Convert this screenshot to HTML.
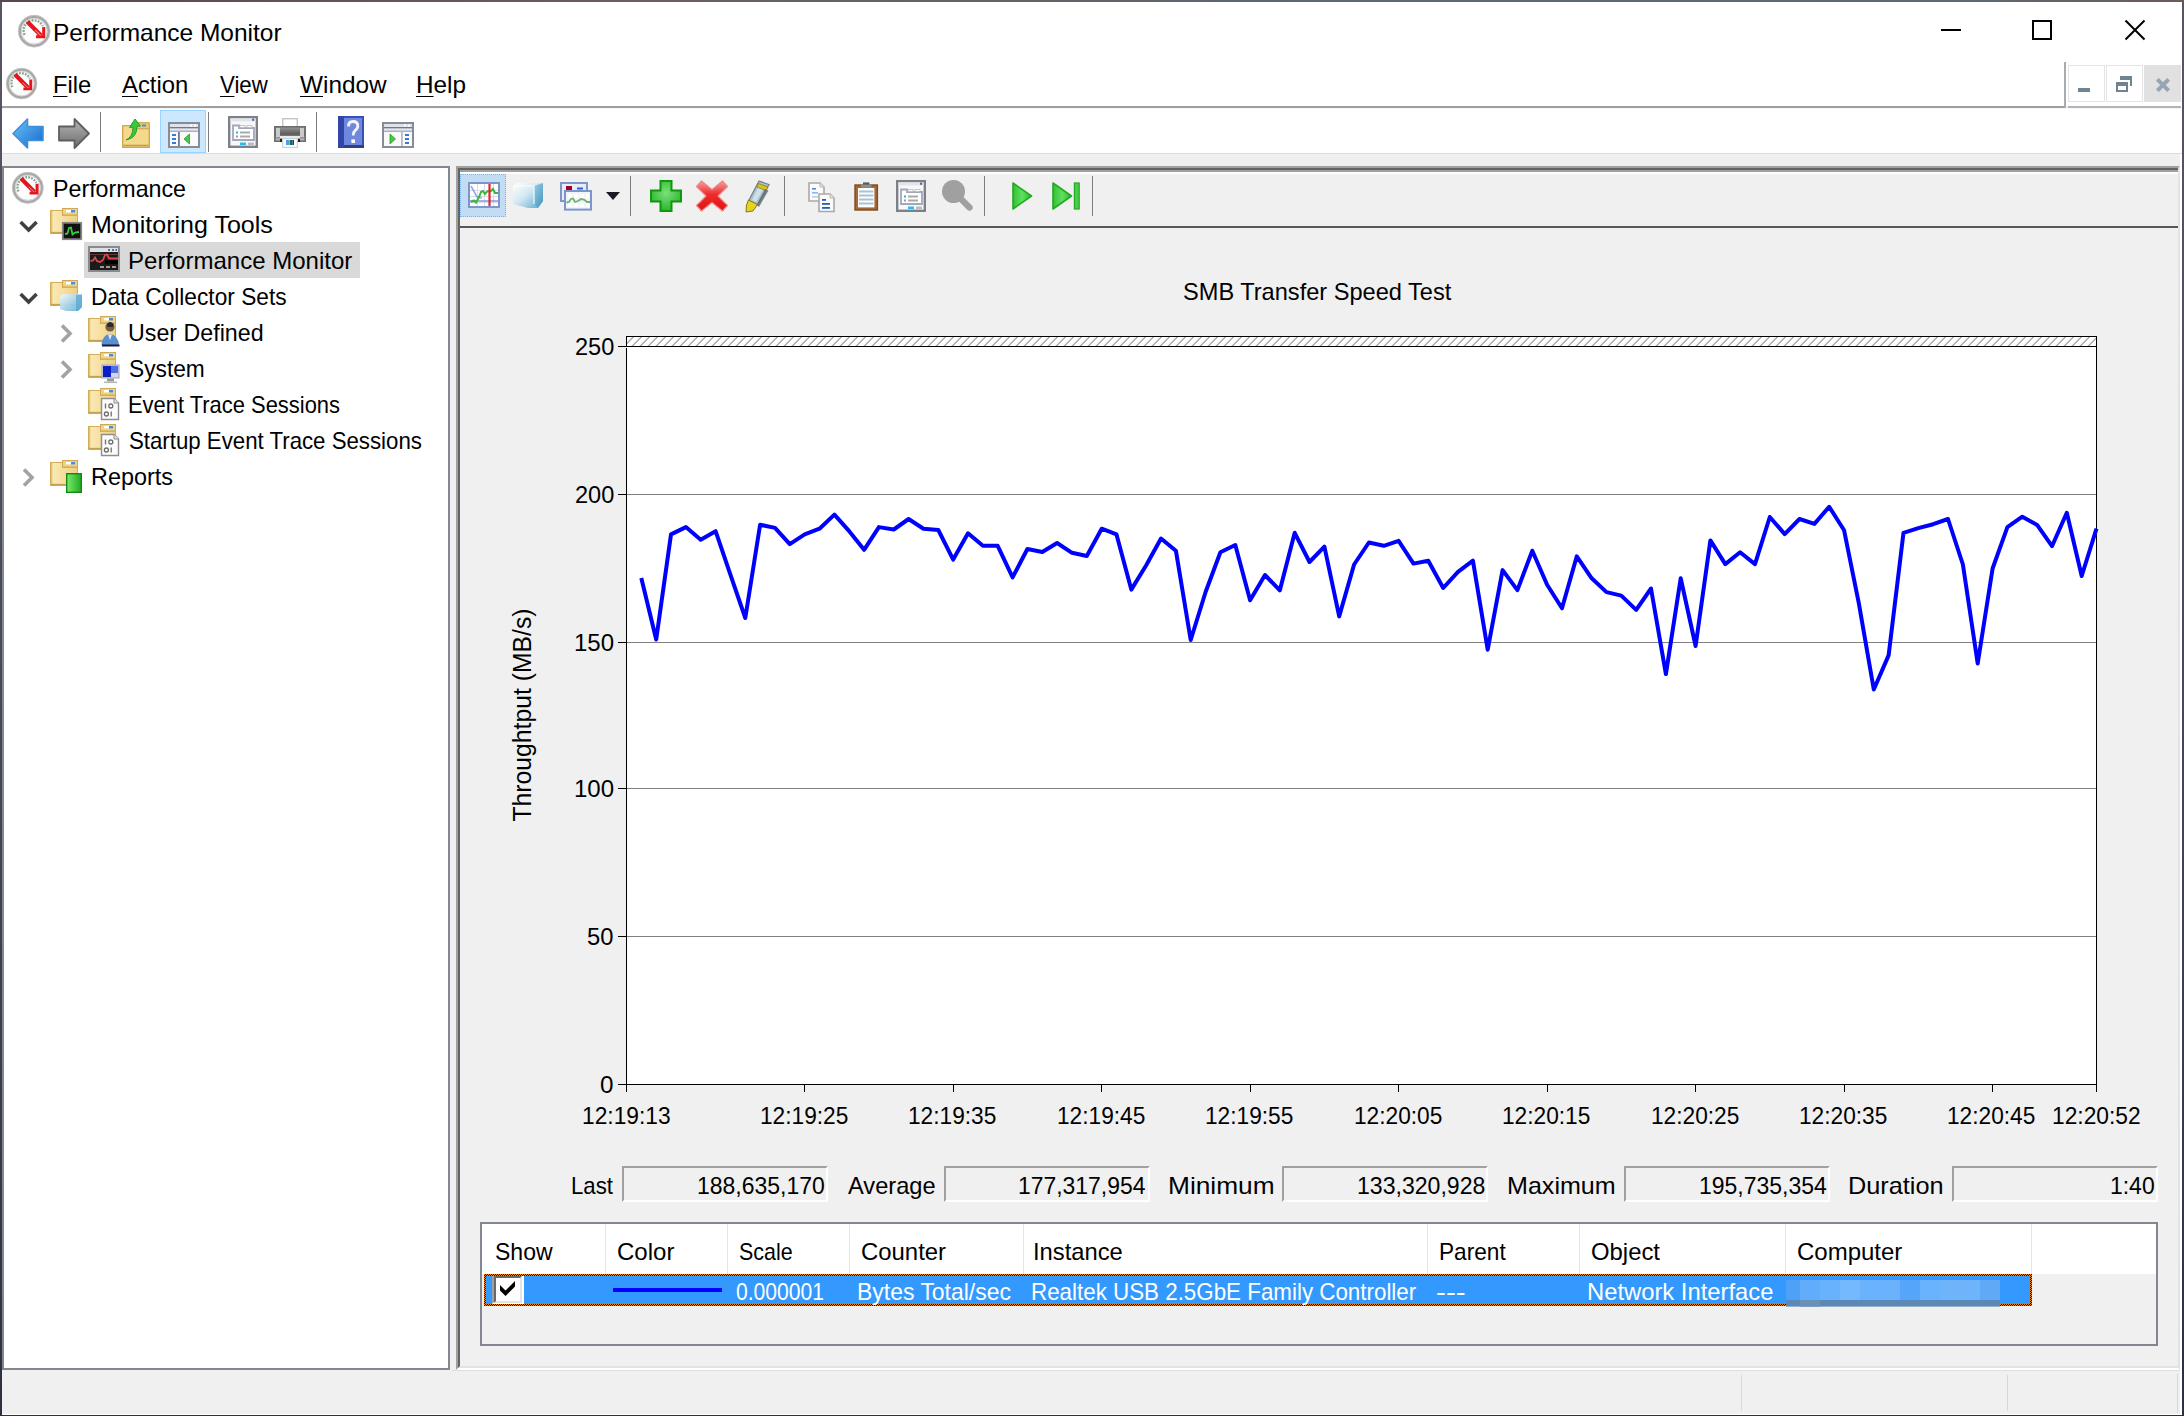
<!DOCTYPE html><html lang="en"><head><meta charset="utf-8"><title>Performance Monitor</title><style>
html,body{margin:0;padding:0;background:#f0f0f0;}
body{width:2184px;height:1416px;overflow:hidden;position:relative;font-family:"Liberation Sans",sans-serif;font-size:24px;}
div,span,svg{position:absolute;box-sizing:border-box;}
.ic{position:absolute;overflow:visible;}
.t{white-space:nowrap;line-height:24px;height:24px;transform-origin:0 50%;display:block;}
.t u{text-decoration:underline;text-decoration-thickness:1.4px;text-underline-offset:3px;}
#win{left:0;top:0;width:2184px;height:1416px;background:linear-gradient(180deg,#5a5560 0,#46485a 50%,#2c3040 100%);}
#client{left:2px;top:2px;width:2180px;height:1412.5px;background:#f0f0f0;border-right:2px solid #fff;border-bottom:1.5px solid #fff;}
#wtop{left:0;top:0;width:2184px;height:2px;background:linear-gradient(90deg,#5a4650 0,#6a5f62 30%,#5d6870 60%,#5f6a72 90%,#6a5a5c 100%);}
#titlebar{left:2px;top:2px;width:2180px;height:60px;background:#fff;}
#menubar{left:2px;top:62px;width:2180px;height:44px;background:#fff;}
#menuline{left:2px;top:106px;width:2063px;height:2px;background:#a0a0a0;}
#menuline2{left:2068px;top:106px;width:2113px;height:2px;background:#b4b4b4;width:113px}
#mdisep{left:2064px;top:62px;width:2px;height:46px;background:#a8acb0;}
#toolbar{left:2px;top:108px;width:2180px;height:45px;background:#fff;border-top:1px solid #f4f7fb;}
#tbline{left:2px;top:153px;width:2180px;height:1px;background:#dcdcdc;}
.sep{width:1px;background:#7d7d7d;}
.mdi{top:65px;width:37px;height:37px;background:#fff;border:1px solid #e3e3e3;}
#tree{left:2px;top:166px;width:448px;height:1204px;background:#fff;border:2px solid #828790;}
#sel{left:84px;top:242px;width:276px;height:36px;background:#d9d9d9;}
#gpane{left:456px;top:166px;width:1724px;height:1204px;background:#f0f0f0;border-top:2px solid #a0a0a0;border-left:2px solid #a0a0a0;border-right:2px solid #e3e3e3;border-bottom:2px solid #fff;}
#gpane2{left:458px;top:168px;width:1720px;height:1200px;border-top:2px solid #646464;border-left:2px solid #646464;border-right:0;border-bottom:2px solid #e3e3e3;}
#gline3{left:460px;top:170px;width:1718px;height:2px;background:#a0a0a0;}
#gwhite{left:460px;top:172px;width:1718px;height:2px;background:#fff;}
#gline{left:460px;top:226px;width:1718px;height:2px;background:#575757;}
#gsel{left:460px;top:174px;width:46px;height:43px;background:#c2dcf3;border:1px dotted #79b4ee;}
#tsel{left:160px;top:110px;width:46px;height:43px;background:#cce8ff;border:1px solid #99d1ff;}
.box{top:1166px;height:36px;border-top:2px solid #a0a0a0;border-left:2px solid #a0a0a0;border-right:2px solid #fff;border-bottom:2px solid #fff;}
#list{left:480px;top:1222px;width:1678px;height:124px;border:2px solid #828790;background:#f0f0f0;}
#lhead{left:482px;top:1224px;width:1674px;height:50px;background:#fff;}
.cs{top:1224px;width:1px;height:50px;background:#e5e5e5;}
#row{left:484px;top:1274px;width:1548px;height:32px;background:#3399ff;}
#chk{left:492px;top:1276px;width:32px;height:28px;background:#fff;border-left:2px solid #a0a0a0;border-top:0;border-right:2px solid #fff;border-bottom:2px solid #fff;}
#chk2{left:494px;top:1276px;width:28px;height:27px;background:#fff;border-left:2px solid #696969;border-top:2px solid #696969;border-right:2px solid #e3e3e3;border-bottom:2px solid #e3e3e3;}
#cline{left:613px;top:1288px;width:109px;height:4px;background:#0000ff;}
#blur{left:1786px;top:1280px;width:214px;height:27px;}
#status1{left:452px;top:1370px;width:1728px;height:1px;background:#dedede;}
.ss2{left:2177px;top:1374px;width:1px;height:39px;background:#d7d7d7;}
.ss{top:1375px;width:1px;height:36px;background:#d7d7d7;}
</style></head><body>
<div id="win"></div><div id="client"></div><div id="wtop"></div>
<div id="titlebar"></div><div id="menubar"></div><div id="menuline"></div><div id="menuline2"></div><div id="mdisep"></div><div id="toolbar"></div><div id="tbline"></div>
<svg class="ic" style="left:17.500000000000004px;top:14.600000000000001px" width="32.4" height="32.4" viewBox="0 0 32 32" ><circle cx="16" cy="16" r="14.5" fill="#fcfcfc" stroke="#a6a6a6" stroke-width="2.8"/><circle cx="16" cy="16" r="15.7" fill="none" stroke="#d0d0d0" stroke-width="0.7"/><circle cx="16" cy="16" r="12.7" fill="none" stroke="#c9c2c2" stroke-width="0.8"/><path d="M6.6 19.6A9.8 9.8 0 0 1 24.4 10.8" fill="none" stroke="#8aa493" stroke-width="2.4" stroke-dasharray="1.8 1.2"/><path d="M9.2 6.6L22.8 20.2" stroke="#e6141c" stroke-width="4.2" stroke-linecap="butt"/><path d="M25.4 11.8V21.4H17.8" fill="none" stroke="#e6141c" stroke-width="3"/><path d="M17 15L22.4 20.2" stroke="#f7c4c4" stroke-width="1" opacity=".7"/></svg>
<svg class="ic" style="left:6.200000000000001px;top:68.0px" width="31.2" height="31.2" viewBox="0 0 32 32" ><circle cx="16" cy="16" r="14.5" fill="#fcfcfc" stroke="#a6a6a6" stroke-width="2.8"/><circle cx="16" cy="16" r="15.7" fill="none" stroke="#d0d0d0" stroke-width="0.7"/><circle cx="16" cy="16" r="12.7" fill="none" stroke="#c9c2c2" stroke-width="0.8"/><path d="M6.6 19.6A9.8 9.8 0 0 1 24.4 10.8" fill="none" stroke="#8aa493" stroke-width="2.4" stroke-dasharray="1.8 1.2"/><path d="M9.2 6.6L22.8 20.2" stroke="#e6141c" stroke-width="4.2" stroke-linecap="butt"/><path d="M25.4 11.8V21.4H17.8" fill="none" stroke="#e6141c" stroke-width="3"/><path d="M17 15L22.4 20.2" stroke="#f7c4c4" stroke-width="1" opacity=".7"/></svg>
<svg class="ic" style="left:1936px;top:15px" width="220" height="30" viewBox="0 0 220 30" ><path d="M5 15H25" stroke="#000" stroke-width="2"/><rect x="97" y="6" width="18" height="18" fill="none" stroke="#000" stroke-width="2"/><path d="M189.5 5.5L208.5 24.5M208.5 5.5L189.5 24.5" stroke="#000" stroke-width="2"/></svg>
<div class="mdi" style="left:2068px"></div><div class="mdi" style="left:2106px"></div><div class="mdi" style="left:2144px;width:37px;background:#e1e1e1;border-color:#e1e1e1"></div>
<svg class="ic" style="left:2068px;top:65px" width="113" height="36" viewBox="0 0 113 36" ><rect x="10" y="23" width="12" height="4" fill="#6f8391"/><g fill="#6f8391"><rect x="52" y="11" width="12" height="4"/><rect x="62" y="15" width="2" height="6"/><rect x="48" y="17" width="12" height="4"/><rect x="48" y="21" width="2" height="6"/><rect x="58" y="21" width="2" height="6"/><rect x="48" y="25" width="12" height="2"/></g><path d="M89.4 14.4L100.6 25.6M100.6 14.4L89.4 25.6" stroke="#97a5b3" stroke-width="4"/></svg>
<div id="tsel"></div>
<svg class="ic" style="left:12px;top:117.5px" width="32" height="31" viewBox="0 0 32 31" ><defs><linearGradient id="ba" x1="0" y1="0" x2="1" y2="1"><stop offset="0" stop-color="#6cc4f8"/><stop offset="1" stop-color="#1668cc"/></linearGradient></defs><path d="M1 15.5L15.5 1V8.5H31V22.5H15.5V30Z" fill="url(#ba)" stroke="#3f8fdc" stroke-width="1.6" stroke-linejoin="round"/></svg><svg class="ic" style="left:58px;top:117.5px" width="32" height="31" viewBox="0 0 32 31" ><defs><linearGradient id="fa" x1="0" y1="0" x2="0" y2="1"><stop offset="0" stop-color="#b5b5b5"/><stop offset="1" stop-color="#6d6d6d"/></linearGradient></defs><path d="M31 15.5L16.5 1V8.5H1V22.5H16.5V30Z" fill="url(#fa)" stroke="#5f5f5f" stroke-width="1.8" stroke-linejoin="round"/></svg><svg class="ic" style="left:122px;top:118px" width="28" height="30" viewBox="0 0 28 30" ><rect x="0.7" y="7.7" width="26.6" height="21.6" fill="#f4d98c" stroke="#d2a94f" stroke-width="1.4"/><rect x="14" y="4.7" width="13.3" height="6" fill="#ecc96f" stroke="#d2a94f" stroke-width="1.2"/><rect x="20" y="6.5" width="4" height="2" fill="#3f8fe8"/><path d="M1.5 27.5H26.5" stroke="#c79f4a" stroke-width="1.6"/><path d="M4 22Q11 19 11 9L7.5 9.5L13 1L18.5 8L15 8.5Q15 20 4 22Z" fill="#3fc63f" stroke="#25a025" stroke-width="1"/></svg><svg class="ic" style="left:168px;top:122px" width="32" height="26" viewBox="0 0 32 26" ><rect x="1" y="1" width="30" height="24" fill="#fafafa" stroke="#868c98" stroke-width="2"/><rect x="2" y="2" width="28" height="3" fill="#dfe2ea"/><rect x="22" y="2.5" width="2" height="2" fill="#fff"/><rect x="26" y="2.5" width="2" height="2" fill="#fff"/><rect x="2" y="5" width="28" height="1.6" fill="#6f7890"/><rect x="2" y="6.6" width="28" height="2" fill="#e4e6ec"/><rect x="2" y="8.6" width="28" height="1.2" fill="#9aa0ae"/><rect x="10" y="10" width="1.8" height="14" fill="#6f7890"/><rect x="4" y="12" width="4" height="2" fill="#3b78d8"/><rect x="4" y="16" width="4" height="2" fill="#3b78d8"/><rect x="4" y="20" width="4" height="2" fill="#3b78d8"/><path d="M21.5 12V22L16 17Z" fill="#45c845" stroke="#2aa02a" stroke-width=".8"/></svg><svg class="ic" style="left:228px;top:116px" width="30" height="32" viewBox="0 0 30 32" ><rect x="1.2" y="1.2" width="27.6" height="29.6" fill="#f7f8fa" stroke="#7e8088" stroke-width="2.4"/><rect x="2.4" y="2.4" width="25.2" height="3" fill="#e2e4ea"/><rect x="24" y="2.6" width="2.2" height="2.2" fill="#5b6796"/><path d="M5 9.5H11V12H26V24H5Z" fill="#fff" stroke="#a3a7b8" stroke-width="1.8"/><rect x="12" y="9.5" width="5" height="2" fill="#fff" stroke="#b6bac8" stroke-width=".8"/><rect x="19" y="9.5" width="5" height="2" fill="#fff" stroke="#b6bac8" stroke-width=".8"/><rect x="8" y="15.5" width="2" height="2" fill="#19b4f0"/><rect x="12" y="15.5" width="10" height="2" fill="#a9a9a9"/><rect x="8" y="19.5" width="2" height="2" fill="#9a9a9a"/><rect x="12" y="19.5" width="10" height="2" fill="#a9a9a9"/><rect x="12" y="26.5" width="6" height="2.6" fill="#27bdf2"/><rect x="20" y="26.5" width="6" height="2.6" fill="#bdbdbd"/></svg><svg class="ic" style="left:274px;top:118px" width="32" height="30" viewBox="0 0 32 30" ><rect x="8.7" y="0.7" width="14.6" height="9" fill="#fff" stroke="#c4c4c4" stroke-width="1.4"/><defs><linearGradient id="pr" x1="0" y1="0" x2="0" y2="1"><stop offset="0" stop-color="#9a9a9a"/><stop offset=".5" stop-color="#5c5c5c"/><stop offset="1" stop-color="#cfcfcf"/></linearGradient></defs><rect x="0.8" y="8.8" width="30.4" height="14.4" fill="url(#pr)" stroke="#6e6e6e" stroke-width="1.6"/><rect x="2" y="10" width="4" height="9" fill="#c9c9c9"/><rect x="26" y="10" width="4" height="9" fill="#c9c9c9"/><rect x="6" y="18" width="20" height="2" fill="#e9e9e9"/><rect x="6" y="21" width="2" height="3" fill="#222"/><rect x="24" y="21" width="2" height="3" fill="#222"/><rect x="8.7" y="20.7" width="14.6" height="8.8" fill="#fff" stroke="#c9d4e2" stroke-width="1.2"/><rect x="12" y="22" width="3" height="5" fill="#4aa0ee"/><rect x="15.5" y="22" width="3" height="5" fill="#1f6e3a"/><rect x="18.5" y="22" width="1.5" height="5" fill="#1a3f8a"/></svg><svg class="ic" style="left:338px;top:116px" width="26" height="32" viewBox="0 0 26 32" ><rect x="0" y="0" width="26" height="32" fill="#3a4fb4"/><rect x="6" y="2" width="18" height="28" fill="#6d88de"/><rect x="0" y="29" width="26" height="3" fill="#34407e"/><rect x="0" y="0" width="6" height="32" fill="#3246a8"/><path d="M10.5 10.5Q10.5 5.5 15 5.5Q19.8 5.5 19.8 10Q19.8 12.6 17 14.6Q15.2 16 15.2 19.5" fill="none" stroke="#f4f6fc" stroke-width="2.8"/><rect x="13.4" y="23.4" width="3.6" height="3.6" fill="#fff"/><path d="M12.5 11.5Q12.5 8 15.5 8" fill="none" stroke="#8a96c8" stroke-width="1" opacity=".7"/></svg><svg class="ic" style="left:382px;top:122px" width="32" height="26" viewBox="0 0 32 26" ><rect x="1" y="1" width="30" height="24" fill="#fafafa" stroke="#868c98" stroke-width="2"/><rect x="2" y="2" width="28" height="3" fill="#dfe2ea"/><rect x="22" y="2.5" width="2" height="2" fill="#fff"/><rect x="26" y="2.5" width="2" height="2" fill="#fff"/><rect x="2" y="5" width="28" height="1.6" fill="#6f7890"/><rect x="2" y="6.6" width="28" height="2" fill="#e4e6ec"/><rect x="2" y="8.6" width="28" height="1.2" fill="#9aa0ae"/><rect x="19" y="10" width="1.8" height="14" fill="#b8bcc8"/><rect x="23" y="12" width="4" height="2" fill="#3b78d8"/><rect x="23" y="16" width="4" height="2" fill="#3b78d8"/><rect x="23" y="20" width="4" height="2" fill="#3b78d8"/><path d="M8 12V22L13.5 17Z" fill="#45c845" stroke="#2aa02a" stroke-width=".8"/></svg>
<div class="sep" style="left:100px;top:112px;height:40px"></div>
<div class="sep" style="left:208px;top:112px;height:40px"></div>
<div class="sep" style="left:316px;top:112px;height:40px"></div>
<div id="tree"></div><div id="sel"></div>
<svg class="ic" style="left:12.099999999999998px;top:172.2px" width="31.6" height="31.6" viewBox="0 0 32 32" ><circle cx="16" cy="16" r="14.5" fill="#fcfcfc" stroke="#a6a6a6" stroke-width="2.8"/><circle cx="16" cy="16" r="15.7" fill="none" stroke="#d0d0d0" stroke-width="0.7"/><circle cx="16" cy="16" r="12.7" fill="none" stroke="#c9c2c2" stroke-width="0.8"/><path d="M6.6 19.6A9.8 9.8 0 0 1 24.4 10.8" fill="none" stroke="#8aa493" stroke-width="2.4" stroke-dasharray="1.8 1.2"/><path d="M9.2 6.6L22.8 20.2" stroke="#e6141c" stroke-width="4.2" stroke-linecap="butt"/><path d="M25.4 11.8V21.4H17.8" fill="none" stroke="#e6141c" stroke-width="3"/><path d="M17 15L22.4 20.2" stroke="#f7c4c4" stroke-width="1" opacity=".7"/></svg>
<svg class="ic" style="left:18.5px;top:220px" width="20" height="14" viewBox="0 0 20 14" ><path d="M1.6 2L9.6 10L17.6 2" fill="none" stroke="#404040" stroke-width="3.5"/></svg><svg class="ic" style="left:50px;top:208px" width="36" height="36" viewBox="0 0 36 36" ><defs><linearGradient id="fg1" x1="0" y1="0" x2="1" y2="0"><stop offset="0" stop-color="#fbebbb"/><stop offset=".45" stop-color="#f6dfa0"/><stop offset="1" stop-color="#efd080"/></linearGradient></defs><rect x="0.5" y="2.5" width="27" height="23" fill="url(#fg1)" stroke="#d3ad59"/><rect x="12.5" y="0.5" width="15" height="7" fill="#efd285" stroke="#cfa852"/><rect x="16" y="2" width="5" height="2.4" fill="#fff"/><rect x="21" y="2" width="4" height="2.4" fill="#3f8fe8"/><rect x="13" y="6.4" width="14" height="1.5" fill="#d6b05c"/><rect x="1" y="3" width="1.4" height="22" fill="#e3c272"/><path d="M1 24.6H27" stroke="#c9a14c" stroke-width="1.5"/><rect x="12.8" y="14.8" width="18.4" height="16.4" fill="#111" stroke="#858585" stroke-width="1.8"/><path d="M15 26L17.5 25.5L19 20L21 19.5L22.5 26.5L25 24.5L29 24" fill="none" stroke="#3ccc3c" stroke-width="1.8"/></svg>
<svg class="ic" style="left:88px;top:246px" width="32" height="26" viewBox="0 0 32 26" ><rect x="1" y="1" width="30" height="24" fill="#1b1b1b" stroke="#8a8a8a" stroke-width="2"/><rect x="2" y="2" width="28" height="4" fill="#dcdfe6"/><rect x="20" y="3" width="2" height="2" fill="#5a6a9a"/><rect x="24" y="3" width="2" height="2" fill="#5a6a9a"/><rect x="27.5" y="3" width="1.5" height="2" fill="#5a6a9a"/><path d="M2 8.5H30" stroke="#5a3a3a" stroke-width="1"/><rect x="17" y="14.5" width="13" height="3.6" fill="#000"/><path d="M2.5 15L5 14.5L7 11.5L9 15L12 16L15 14L17 9L19 8.5L21 12.5L30 12.5" fill="none" stroke="#e04646" stroke-width="1.8"/><rect x="12" y="20" width="4" height="2" fill="#9a9a9a"/><rect x="18" y="20" width="4" height="2" fill="#9a9a9a"/><rect x="24" y="20" width="4" height="2" fill="#9a9a9a"/></svg>
<svg class="ic" style="left:18.5px;top:292px" width="20" height="14" viewBox="0 0 20 14" ><path d="M1.6 2L9.6 10L17.6 2" fill="none" stroke="#404040" stroke-width="3.5"/></svg><svg class="ic" style="left:50px;top:280px" width="36" height="36" viewBox="0 0 36 36" ><defs><linearGradient id="fg2" x1="0" y1="0" x2="1" y2="0"><stop offset="0" stop-color="#fbebbb"/><stop offset=".45" stop-color="#f6dfa0"/><stop offset="1" stop-color="#efd080"/></linearGradient></defs><rect x="0.5" y="2.5" width="27" height="23" fill="url(#fg2)" stroke="#d3ad59"/><rect x="12.5" y="0.5" width="15" height="7" fill="#efd285" stroke="#cfa852"/><rect x="16" y="2" width="5" height="2.4" fill="#fff"/><rect x="21" y="2" width="4" height="2.4" fill="#3f8fe8"/><rect x="13" y="6.4" width="14" height="1.5" fill="#d6b05c"/><rect x="1" y="3" width="1.4" height="22" fill="#e3c272"/><path d="M1 24.6H27" stroke="#c9a14c" stroke-width="1.5"/><defs><linearGradient id="cb2" x1="0" y1="0" x2="1" y2="1"><stop offset="0" stop-color="#f4f8fb"/><stop offset="1" stop-color="#5fb0d6"/></linearGradient></defs><path d="M10 16L13 14H32V27L28 31H16L10 29Z" fill="url(#cb2)" opacity=".95"/><path d="M26 15H32V27L28 31H26Z" fill="#58a8cf" opacity=".75"/></svg>
<svg class="ic" style="left:60px;top:324px" width="14" height="20" viewBox="0 0 14 20" ><path d="M2 1.6L10 9.6L2 17.6" fill="none" stroke="#a3a3a3" stroke-width="3.6"/></svg><svg class="ic" style="left:88px;top:316px" width="36" height="36" viewBox="0 0 36 36" ><defs><linearGradient id="fg3" x1="0" y1="0" x2="1" y2="0"><stop offset="0" stop-color="#fbebbb"/><stop offset=".45" stop-color="#f6dfa0"/><stop offset="1" stop-color="#efd080"/></linearGradient></defs><rect x="0.5" y="2.5" width="27" height="23" fill="url(#fg3)" stroke="#d3ad59"/><rect x="12.5" y="0.5" width="15" height="7" fill="#efd285" stroke="#cfa852"/><rect x="16" y="2" width="5" height="2.4" fill="#fff"/><rect x="21" y="2" width="4" height="2.4" fill="#3f8fe8"/><rect x="13" y="6.4" width="14" height="1.5" fill="#d6b05c"/><rect x="1" y="3" width="1.4" height="22" fill="#e3c272"/><path d="M1 24.6H27" stroke="#c9a14c" stroke-width="1.5"/><circle cx="22" cy="11" r="4.6" fill="#7a5a40"/><path d="M19 8Q22 4 25.5 8L25 11H19.5Z" fill="#2b2b2b"/><path d="M13.5 29Q14 19 22 18Q30 19 31 29Z" fill="#5b8fd0"/><path d="M20 18.5L22 24L24 18.5Z" fill="#e9eef6"/><path d="M14 29.5H31.5" stroke="#1b1b3a" stroke-width="2"/></svg>
<svg class="ic" style="left:60px;top:360px" width="14" height="20" viewBox="0 0 14 20" ><path d="M2 1.6L10 9.6L2 17.6" fill="none" stroke="#a3a3a3" stroke-width="3.6"/></svg><svg class="ic" style="left:88px;top:352px" width="36" height="36" viewBox="0 0 36 36" ><defs><linearGradient id="fg4" x1="0" y1="0" x2="1" y2="0"><stop offset="0" stop-color="#fbebbb"/><stop offset=".45" stop-color="#f6dfa0"/><stop offset="1" stop-color="#efd080"/></linearGradient></defs><rect x="0.5" y="2.5" width="27" height="23" fill="url(#fg4)" stroke="#d3ad59"/><rect x="12.5" y="0.5" width="15" height="7" fill="#efd285" stroke="#cfa852"/><rect x="16" y="2" width="5" height="2.4" fill="#fff"/><rect x="21" y="2" width="4" height="2.4" fill="#3f8fe8"/><rect x="13" y="6.4" width="14" height="1.5" fill="#d6b05c"/><rect x="1" y="3" width="1.4" height="22" fill="#e3c272"/><path d="M1 24.6H27" stroke="#c9a14c" stroke-width="1.5"/><rect x="14" y="13" width="17" height="13" fill="#cfd6e6" stroke="#9aa3b7"/><rect x="15" y="14" width="8" height="11" fill="#0d1fc4"/><rect x="23" y="14" width="7" height="7" fill="#4d6fe6"/><rect x="19" y="26.5" width="7" height="3" fill="#9a9a9a"/><rect x="16" y="29.5" width="13" height="1.6" fill="#b8b8b8"/></svg>
<svg class="ic" style="left:88px;top:388px" width="36" height="36" viewBox="0 0 36 36" ><defs><linearGradient id="fg5" x1="0" y1="0" x2="1" y2="0"><stop offset="0" stop-color="#fbebbb"/><stop offset=".45" stop-color="#f6dfa0"/><stop offset="1" stop-color="#efd080"/></linearGradient></defs><rect x="0.5" y="2.5" width="27" height="23" fill="url(#fg5)" stroke="#d3ad59"/><rect x="12.5" y="0.5" width="15" height="7" fill="#efd285" stroke="#cfa852"/><rect x="16" y="2" width="5" height="2.4" fill="#fff"/><rect x="21" y="2" width="4" height="2.4" fill="#3f8fe8"/><rect x="13" y="6.4" width="14" height="1.5" fill="#d6b05c"/><rect x="1" y="3" width="1.4" height="22" fill="#e3c272"/><path d="M1 24.6H27" stroke="#c9a14c" stroke-width="1.5"/><path d="M13.5 10.5H26L30.5 15V31.5H13.5Z" fill="#fbfbfb" stroke="#8e8e8e" stroke-width="1.4"/><path d="M26 10.5V15H30.5" fill="#e4e4e4" stroke="#8e8e8e" stroke-width="1"/><g fill="none" stroke="#6e6e6e" stroke-width="1.3"><path d="M17.5 15.5V20.5"/><circle cx="22.8" cy="18" r="2"/><circle cx="18.4" cy="26" r="2"/><path d="M23.2 23.5V28.5"/></g></svg>
<svg class="ic" style="left:88px;top:424px" width="36" height="36" viewBox="0 0 36 36" ><defs><linearGradient id="fg6" x1="0" y1="0" x2="1" y2="0"><stop offset="0" stop-color="#fbebbb"/><stop offset=".45" stop-color="#f6dfa0"/><stop offset="1" stop-color="#efd080"/></linearGradient></defs><rect x="0.5" y="2.5" width="27" height="23" fill="url(#fg6)" stroke="#d3ad59"/><rect x="12.5" y="0.5" width="15" height="7" fill="#efd285" stroke="#cfa852"/><rect x="16" y="2" width="5" height="2.4" fill="#fff"/><rect x="21" y="2" width="4" height="2.4" fill="#3f8fe8"/><rect x="13" y="6.4" width="14" height="1.5" fill="#d6b05c"/><rect x="1" y="3" width="1.4" height="22" fill="#e3c272"/><path d="M1 24.6H27" stroke="#c9a14c" stroke-width="1.5"/><path d="M13.5 10.5H26L30.5 15V31.5H13.5Z" fill="#fbfbfb" stroke="#8e8e8e" stroke-width="1.4"/><path d="M26 10.5V15H30.5" fill="#e4e4e4" stroke="#8e8e8e" stroke-width="1"/><g fill="none" stroke="#6e6e6e" stroke-width="1.3"><path d="M17.5 15.5V20.5"/><circle cx="22.8" cy="18" r="2"/><circle cx="18.4" cy="26" r="2"/><path d="M23.2 23.5V28.5"/></g></svg>
<svg class="ic" style="left:22px;top:468px" width="14" height="20" viewBox="0 0 14 20" ><path d="M2 1.6L10 9.6L2 17.6" fill="none" stroke="#a3a3a3" stroke-width="3.6"/></svg><svg class="ic" style="left:50px;top:460px" width="36" height="36" viewBox="0 0 36 36" ><defs><linearGradient id="fg7" x1="0" y1="0" x2="1" y2="0"><stop offset="0" stop-color="#fbebbb"/><stop offset=".45" stop-color="#f6dfa0"/><stop offset="1" stop-color="#efd080"/></linearGradient></defs><rect x="0.5" y="2.5" width="27" height="23" fill="url(#fg7)" stroke="#d3ad59"/><rect x="12.5" y="0.5" width="15" height="7" fill="#efd285" stroke="#cfa852"/><rect x="16" y="2" width="5" height="2.4" fill="#fff"/><rect x="21" y="2" width="4" height="2.4" fill="#3f8fe8"/><rect x="13" y="6.4" width="14" height="1.5" fill="#d6b05c"/><rect x="1" y="3" width="1.4" height="22" fill="#e3c272"/><path d="M1 24.6H27" stroke="#c9a14c" stroke-width="1.5"/><defs><linearGradient id="rp7" x1="0" y1="0" x2="1" y2="0"><stop offset="0" stop-color="#7bea6e"/><stop offset="1" stop-color="#1faa1f"/></linearGradient></defs><rect x="16.7" y="13.7" width="14.6" height="18.6" fill="url(#rp7)" stroke="#148a14" stroke-width="1.4"/></svg>
<div id="gpane"></div><div id="gpane2"></div><div id="gline3"></div><div id="gwhite"></div><div id="gline"></div><div id="gsel"></div>
<svg class="ic" style="left:468px;top:182px" width="32" height="26" viewBox="0 0 32 26" ><rect x="1" y="1" width="30" height="24" fill="#fff" stroke="#7d95c9" stroke-width="2"/><g stroke="#d4dcec" stroke-width="1"><path d="M2 8.5H30M2 14.5H30M2 20.5H30M9.5 2V24M16.5 2V24M25.5 2V24"/></g><path d="M2 19H30" stroke="#5c78c8" stroke-width="1.4" opacity=".8"/><path d="M3 4L9 15L14 16" stroke="#7d95d8" stroke-width="1.6" fill="none" opacity=".8"/><path d="M3 20L6 18.5L8 20.5L11 15L13 10L15 9L17 12L19 9.5L23 9L25 7L27 11L30 11" fill="none" stroke="#3cb43c" stroke-width="2"/><path d="M21.5 2V24" stroke="#e8202a" stroke-width="2.2"/></svg><svg class="ic" style="left:512px;top:182px" width="32" height="27" viewBox="0 0 32 27" ><defs><linearGradient id="c1" x1="0" y1="0" x2="1" y2="1"><stop offset="0" stop-color="#ffffff"/><stop offset=".45" stop-color="#d4e8f2"/><stop offset="1" stop-color="#56a8d0"/></linearGradient><linearGradient id="c2" x1="0" y1="0" x2="1" y2="1"><stop offset="0" stop-color="#8cc6e0"/><stop offset="1" stop-color="#3f92bc"/></linearGradient></defs><path d="M1 4L5 1H31V19L26 26H16L1 22Z" fill="url(#c1)"/><path d="M22 4L31 1V19L26 26L22 22Z" fill="url(#c2)" opacity=".85"/><path d="M1 4H22V22" fill="none" stroke="#fff" stroke-width="1.2" opacity=".9"/></svg><svg class="ic" style="left:560px;top:181.5px" width="32" height="29" viewBox="0 0 32 29" ><rect x="1" y="1" width="26" height="18" fill="#e8ecf4" stroke="#7d95c9" stroke-width="2"/><rect x="6" y="4" width="6" height="4.4" fill="#a1002a"/><rect x="17" y="5.5" width="6" height="2" fill="#2f5fd8"/><rect x="5" y="9" width="26" height="18.6" fill="#f2f4f8" stroke="#7d95c9" stroke-width="2"/><g fill="#fff"><rect x="8" y="12" width="4" height="4"/><rect x="14" y="12" width="4" height="4"/><rect x="20" y="12" width="4" height="4"/><rect x="26" y="12" width="3" height="4"/><rect x="8" y="21" width="4" height="4"/><rect x="14" y="21" width="4" height="4"/><rect x="20" y="21" width="4" height="4"/><rect x="26" y="21" width="3" height="4"/></g><path d="M6.5 20.5L9 20L11 17L13 16.5L15 20L18 19L21 17L24 17.5L27 20L30 20" fill="none" stroke="#6fb36f" stroke-width="1.8"/></svg><svg class="ic" style="left:606px;top:192px" width="14" height="8" viewBox="0 0 14 8" ><path d="M0 0H14L7 8Z" fill="#1a1a24"/></svg>
<svg class="ic" style="left:650px;top:180px" width="32" height="32" viewBox="0 0 32 32" ><defs><radialGradient id="ga" cx=".5" cy=".4" r=".7"><stop offset="0" stop-color="#7be07b"/><stop offset="1" stop-color="#1fae1f"/></radialGradient></defs><path d="M10.5 1H21.5V10.5H31V21.5H21.5V31H10.5V21.5H1V10.5H10.5Z" fill="url(#ga)" stroke="#0d980d" stroke-width="2" stroke-linejoin="miter"/></svg><svg class="ic" style="left:695.5px;top:180px" width="32" height="32" viewBox="0 0 32 32" ><defs><linearGradient id="gd" x1="0" y1="0" x2="0" y2="1"><stop offset="0" stop-color="#f4a0a0"/><stop offset=".45" stop-color="#ee2a2a"/><stop offset="1" stop-color="#e01212"/></linearGradient></defs><path d="M5.5 1L16 9.5L26.5 1L31.5 6.5L22 16L31.5 25.5L26.5 31L16 22.5L5.5 31L0.5 25.5L10 16L0.5 6.5Z" fill="url(#gd)" stroke="#ee8a8a" stroke-width="1.2" stroke-linejoin="round"/></svg><svg class="ic" style="left:745px;top:180px" width="26" height="33" viewBox="0 0 26 33" ><path d="M14 1L24 4.5L12.5 25L3.5 21Z" fill="#a9c4cc" stroke="#6f8088" stroke-width="1.2"/><path d="M15 4L20 6L11 22L7 20Z" fill="#d8e8ec" opacity=".8"/><path d="M13.5 3.5L23 7L21 10.5L12 7Z" fill="#d9c51c" stroke="#8a7a10" stroke-width=".8"/><path d="M3.5 20L12.5 24.5L8 31L1 32L1.5 25Z" fill="#e4d41f" stroke="#8a7a10" stroke-width="1"/><path d="M20 9L23.5 10.5L14 27L11.5 25Z" fill="#5d6a70" opacity=".8"/></svg><svg class="ic" style="left:808px;top:181.5px" width="27" height="31" viewBox="0 0 27 31" ><path d="M1 1H12L16 5V19H1Z" fill="#fbfbfb" stroke="#a9a9a9" stroke-width="1.6"/><path d="M12 1V5H16" fill="#e6e6e6" stroke="#b5b5b5" stroke-width="1"/><g fill="#4a90d9"><rect x="4" y="6" width="4" height="1.6"/><rect x="4" y="10" width="6" height="1.6" opacity=".6"/><rect x="4" y="14" width="6" height="1.6" opacity=".4"/></g><path d="M11 12H22L26 16V29.5H11Z" fill="#fbfbfb" stroke="#a9a9a9" stroke-width="1.6"/><path d="M22 12V16H26" fill="#e6e6e6" stroke="#b5b5b5" stroke-width="1"/><g fill="#1f5fb8"><rect x="14" y="17" width="4" height="1.8"/><rect x="14" y="21" width="8" height="1.8"/><rect x="14" y="25" width="8" height="1.8"/></g></svg><svg class="ic" style="left:854px;top:181.5px" width="25" height="29" viewBox="0 0 25 29" ><rect x="1" y="3" width="22.4" height="25" fill="#a46a35" stroke="#7e4c20" stroke-width="1.4"/><rect x="4" y="6" width="16.4" height="19.4" fill="#fdfdfd"/><g fill="#a9c3d6"><rect x="5" y="8.5" width="14.4" height="2"/><rect x="5" y="12.5" width="14.4" height="2"/><rect x="5" y="16.5" width="14.4" height="2"/><rect x="5" y="20.5" width="14.4" height="2"/></g><rect x="7" y="2" width="10.4" height="3.6" fill="#8e8e8e"/><rect x="9" y="0.4" width="6.4" height="2.2" fill="#5a5a5a"/></svg><svg class="ic" style="left:896px;top:180px" width="30" height="32" viewBox="0 0 30 32" ><rect x="1.2" y="1.2" width="27.6" height="29.6" fill="#f7f8fa" stroke="#7e8088" stroke-width="2.4"/><rect x="2.4" y="2.4" width="25.2" height="3" fill="#e2e4ea"/><rect x="24" y="2.6" width="2.2" height="2.2" fill="#5b6796"/><path d="M5 9.5H11V12H26V24H5Z" fill="#fff" stroke="#a3a7b8" stroke-width="1.8"/><rect x="12" y="9.5" width="5" height="2" fill="#fff" stroke="#b6bac8" stroke-width=".8"/><rect x="19" y="9.5" width="5" height="2" fill="#fff" stroke="#b6bac8" stroke-width=".8"/><rect x="8" y="15.5" width="2" height="2" fill="#19b4f0"/><rect x="12" y="15.5" width="10" height="2" fill="#a9a9a9"/><rect x="8" y="19.5" width="2" height="2" fill="#9a9a9a"/><rect x="12" y="19.5" width="10" height="2" fill="#a9a9a9"/><rect x="12" y="26.5" width="6" height="2.6" fill="#27bdf2"/><rect x="20" y="26.5" width="6" height="2.6" fill="#bdbdbd"/></svg><svg class="ic" style="left:941.5px;top:179.5px" width="31" height="32" viewBox="0 0 31 32" ><circle cx="11.5" cy="11.5" r="11.5" fill="#a0a0a0"/><path d="M17 17L27.5 27.5" stroke="#a0a0a0" stroke-width="6.4" stroke-linecap="round"/></svg><svg class="ic" style="left:1012px;top:182px" width="21" height="28" viewBox="0 0 21 28" ><defs><linearGradient id="pl" x1="0" y1="0" x2="1" y2="0"><stop offset="0" stop-color="#35c035"/><stop offset=".5" stop-color="#5fe05f"/><stop offset="1" stop-color="#2db82d"/></linearGradient></defs><path d="M1 1L19.5 14L1 27Z" fill="url(#pl)" stroke="#22aa22" stroke-width="1.6" stroke-linejoin="round"/></svg><svg class="ic" style="left:1052px;top:182px" width="28" height="28" viewBox="0 0 28 28" ><defs><linearGradient id="ps" x1="0" y1="0" x2="1" y2="0"><stop offset="0" stop-color="#35c035"/><stop offset=".5" stop-color="#5fe05f"/><stop offset="1" stop-color="#2db82d"/></linearGradient></defs><path d="M1 1L19.5 14L1 27Z" fill="url(#ps)" stroke="#22aa22" stroke-width="1.6" stroke-linejoin="round"/><rect x="22.4" y="1" width="4.8" height="26" fill="#49cc49" stroke="#22aa22" stroke-width="1.2"/></svg>
<div class="sep" style="left:630px;top:176px;height:40px"></div>
<div class="sep" style="left:784px;top:176px;height:40px"></div>
<div class="sep" style="left:984px;top:176px;height:40px"></div>
<div class="sep" style="left:1092px;top:176px;height:40px"></div>
<svg class="ic" style="left:0;top:0" width="2184" height="1416" viewBox="0 0 2184 1416"><rect x="626" y="346" width="1470" height="739" fill="#fff"/><defs><pattern id="hat" width="8" height="8" patternUnits="userSpaceOnUse" patternTransform="translate(1.8 0.5)"><path d="M-1 9L9 -1M-1 1L1 -1M7 9L9 7" stroke="#5a5a5a" stroke-width="1"/></pattern></defs><rect x="626.5" y="336.5" width="1470" height="10" fill="#fff"/><rect x="627" y="337" width="1469" height="9" fill="url(#hat)"/><rect x="626.5" y="336.5" width="1470" height="10" fill="none" stroke="#000" stroke-width="1"/><path d="M627 494.5H2096" stroke="#808080" stroke-width="1"/><path d="M627 642.5H2096" stroke="#808080" stroke-width="1"/><path d="M627 788.5H2096" stroke="#808080" stroke-width="1"/><path d="M627 936.5H2096" stroke="#808080" stroke-width="1"/><path d="M626.5 348V1092" stroke="#000" stroke-width="1"/><path d="M2096.5 346V1092" stroke="#000" stroke-width="1"/><path d="M618 1084.5H2097" stroke="#000" stroke-width="1"/><path d="M618 346.5H627" stroke="#000" stroke-width="1"/><path d="M618 494.5H627" stroke="#000" stroke-width="1"/><path d="M618 642.5H627" stroke="#000" stroke-width="1"/><path d="M618 788.5H627" stroke="#000" stroke-width="1"/><path d="M618 936.5H627" stroke="#000" stroke-width="1"/><path d="M804.5 1085V1092" stroke="#000" stroke-width="1"/><path d="M953.5 1085V1092" stroke="#000" stroke-width="1"/><path d="M1101.5 1085V1092" stroke="#000" stroke-width="1"/><path d="M1250.5 1085V1092" stroke="#000" stroke-width="1"/><path d="M1398.5 1085V1092" stroke="#000" stroke-width="1"/><path d="M1547.5 1085V1092" stroke="#000" stroke-width="1"/><path d="M1695.5 1085V1092" stroke="#000" stroke-width="1"/><path d="M1844.5 1085V1092" stroke="#000" stroke-width="1"/><path d="M1992.5 1085V1092" stroke="#000" stroke-width="1"/><polyline points="641.3,578.0 656.2,639.5 671.0,534.4 685.9,527.1 700.7,539.8 715.6,531.2 730.4,574.6 745.3,618.0 760.1,524.7 775.0,527.9 789.8,544.2 804.7,534.4 819.5,528.7 834.4,514.6 849.2,531.2 864.1,549.8 878.9,527.1 893.8,529.5 908.6,519.0 923.5,528.7 938.3,530.0 953.2,559.6 968.0,533.3 982.9,545.8 997.7,545.8 1012.6,577.4 1027.4,549.0 1042.3,552.0 1057.1,543.0 1072.0,552.8 1086.8,556.0 1101.7,528.7 1116.5,534.4 1131.3,589.6 1146.2,565.3 1161.0,538.5 1175.9,550.7 1190.7,640.0 1205.6,592.0 1220.4,552.3 1235.3,545.0 1250.1,600.2 1265.0,575.0 1279.8,590.4 1294.7,532.8 1309.5,562.0 1324.4,546.6 1339.2,616.4 1354.1,564.5 1368.9,542.5 1383.8,545.8 1398.6,540.9 1413.5,563.6 1428.3,560.7 1443.2,588.0 1458.0,571.8 1472.9,560.6 1487.7,649.7 1502.6,570.1 1517.4,590.1 1532.3,550.7 1547.1,584.8 1562.0,608.3 1576.8,556.3 1591.7,578.3 1606.5,592.1 1621.3,595.6 1636.2,609.9 1651.0,588.5 1665.9,674.1 1680.7,578.3 1695.6,646.0 1710.4,540.4 1725.3,564.1 1740.1,552.3 1755.0,564.1 1769.8,517.0 1784.7,534.1 1799.5,519.0 1814.4,523.9 1829.2,506.8 1844.1,530.3 1858.9,603.6 1873.8,689.5 1888.6,655.4 1903.5,532.8 1918.3,528.1 1933.2,524.2 1948.0,519.0 1962.9,564.5 1977.7,663.5 1992.6,568.5 2007.4,527.1 2022.3,516.7 2037.1,524.9 2052.0,546.2 2066.8,512.8 2081.7,576.0 2096.5,528.6" fill="none" stroke="#0000ff" stroke-width="4" stroke-linejoin="round" stroke-linecap="butt"/></svg>
<span class="t" id="yl" style="left:418.3px;top:703px;width:210px;text-align:center;transform:rotate(-90deg) scale(1.03,1.05);transform-origin:50% 50%">Throughtput (MB/s)</span>
<div class="box" style="left:622px;width:206px"></div>
<div class="box" style="left:944px;width:206px"></div>
<div class="box" style="left:1282px;width:206px"></div>
<div class="box" style="left:1624px;width:206px"></div>
<div class="box" style="left:1952px;width:206px"></div>
<div id="list"></div><div id="lhead"></div>
<div class="cs" style="left:605px"></div>
<div class="cs" style="left:727px"></div>
<div class="cs" style="left:849px"></div>
<div class="cs" style="left:1023px"></div>
<div class="cs" style="left:1427px"></div>
<div class="cs" style="left:1579px"></div>
<div class="cs" style="left:1785px"></div>
<div class="cs" style="left:2031px"></div>
<div id="row"></div><div id="chk"></div><div id="chk2"></div><div id="cline"></div>
<svg class="ic" style="left:0px;top:0px" width="2184" height="1416" viewBox="0 0 2184 1416" ><defs><pattern id="ck" width="2" height="2" patternUnits="userSpaceOnUse"><rect width="2" height="2" fill="#000"/><rect width="1" height="1" fill="#ff8c00"/><rect x="1" y="1" width="1" height="1" fill="#ff8c00"/></pattern></defs><path d="M484 1274H2032V1306H484ZM486 1276V1304H2030V1276Z" fill="url(#ck)" fill-rule="evenodd"/><polygon points="500,1285 505.5,1290.5 515,1281 515,1286.5 505.5,1296 500,1290.5" fill="#000"/></svg>
<svg class="ic" style="left:1786px;top:1280px" width="214" height="27" viewBox="0 0 214 27" ><rect x="0" y="0" width="14" height="20" fill="#4fa1f8"/><rect x="14" y="0" width="20" height="20" fill="#62adfb"/><rect x="34" y="0" width="20" height="20" fill="#68b1fc"/><rect x="54" y="0" width="20" height="20" fill="#74b8fd"/><rect x="74" y="0" width="40" height="20" fill="#6ab3fc"/><rect x="114" y="0" width="20" height="20" fill="#55a5fb"/><rect x="134" y="0" width="20" height="20" fill="#69b2fc"/><rect x="154" y="0" width="40" height="20" fill="#6eb4fb"/><rect x="194" y="0" width="20" height="20" fill="#5fa9f6"/><rect x="0" y="20" width="214" height="6.6" fill="#5c88b5"/><rect x="14" y="20" width="20" height="6.6" fill="#6a90ba"/></svg>
<div id="status1"></div><div class="ss" style="left:1741px"></div><div class="ss" style="left:2007px"></div><div class="ss2"></div>
<span class="t" id="title" style="left:53.44px;top:20.50px;color:#000;transform:scaleX(1.0201)">Performance Monitor</span>
<span class="t" id="m1" style="left:52.91px;top:73.40px;color:#000;transform:scaleX(0.9862)"><u>F</u>ile</span>
<span class="t" id="m2" style="left:122.38px;top:73.40px;color:#000;transform:scaleX(0.9920)"><u>A</u>ction</span>
<span class="t" id="m3" style="left:220.15px;top:73.40px;color:#000;transform:scaleX(0.9257)"><u>V</u>iew</span>
<span class="t" id="m4" style="left:300.18px;top:73.40px;color:#000;transform:scaleX(1.0146)"><u>W</u>indow</span>
<span class="t" id="m5" style="left:416.36px;top:73.40px;color:#000;transform:scaleX(1.0128)"><u>H</u>elp</span>
<span class="t" id="tr0" style="left:52.65px;top:177.00px;color:#000;transform:scaleX(0.9681)">Performance</span>
<span class="t" id="tr1" style="left:90.59px;top:213.30px;color:#000;transform:scaleX(1.0430)">Monitoring Tools</span>
<span class="t" id="tr2" style="left:128.28px;top:249.00px;color:#000;transform:scaleX(1.0012)">Performance Monitor</span>
<span class="t" id="tr3" style="left:90.80px;top:285.10px;color:#000;transform:scaleX(0.9458)">Data Collector Sets</span>
<span class="t" id="tr4" style="left:128.41px;top:321.20px;color:#000;transform:scaleX(0.9681)">User Defined</span>
<span class="t" id="tr5" style="left:129.07px;top:357.00px;color:#000;transform:scaleX(0.9471)">System</span>
<span class="t" id="tr6" style="left:128.47px;top:393.20px;color:#000;transform:scaleX(0.9133)">Event Trace Sessions</span>
<span class="t" id="tr7" style="left:129.10px;top:429.40px;color:#000;transform:scaleX(0.9263)">Startup Event Trace Sessions</span>
<span class="t" id="tr8" style="left:90.74px;top:465.10px;color:#000;transform:scaleX(0.9747)">Reports</span>
<span class="t" id="ct" style="left:1183.22px;top:279.70px;color:#000;transform:scaleX(0.9827)">SMB Transfer Speed Test</span>
<span class="t" id="y250" style="left:574.54px;top:334.90px;color:#000;transform:scaleX(0.9816)">250</span>
<span class="t" id="y200" style="left:574.54px;top:483.30px;color:#000;transform:scaleX(0.9816)">200</span>
<span class="t" id="y150" style="left:573.74px;top:630.80px;color:#000;transform:scaleX(1.0020)">150</span>
<span class="t" id="y100" style="left:573.74px;top:777.30px;color:#000;transform:scaleX(1.0020)">100</span>
<span class="t" id="y50" style="left:587.32px;top:925.30px;color:#000;transform:scaleX(0.9916)">50</span>
<span class="t" id="y0" style="left:600.17px;top:1073.20px;color:#000;transform:scaleX(1.0119)">0</span>
<span class="t" id="x0" style="left:581.65px;top:1104.00px;color:#000;transform:scaleX(0.9496)">12:19:13</span>
<span class="t" id="x1" style="left:759.66px;top:1104.00px;color:#000;transform:scaleX(0.9451)">12:19:25</span>
<span class="t" id="x2" style="left:907.86px;top:1104.00px;color:#000;transform:scaleX(0.9451)">12:19:35</span>
<span class="t" id="x3" style="left:1056.56px;top:1104.00px;color:#000;transform:scaleX(0.9451)">12:19:45</span>
<span class="t" id="x4" style="left:1205.06px;top:1104.00px;color:#000;transform:scaleX(0.9451)">12:19:55</span>
<span class="t" id="x5" style="left:1353.56px;top:1104.00px;color:#000;transform:scaleX(0.9451)">12:20:05</span>
<span class="t" id="x6" style="left:1501.86px;top:1104.00px;color:#000;transform:scaleX(0.9451)">12:20:15</span>
<span class="t" id="x7" style="left:1650.56px;top:1104.00px;color:#000;transform:scaleX(0.9451)">12:20:25</span>
<span class="t" id="x8" style="left:1799.06px;top:1104.00px;color:#000;transform:scaleX(0.9451)">12:20:35</span>
<span class="t" id="x9" style="left:1947.36px;top:1104.00px;color:#000;transform:scaleX(0.9451)">12:20:45</span>
<span class="t" id="x10" style="left:2051.75px;top:1104.00px;color:#000;transform:scaleX(0.9497)">12:20:52</span>
<span class="t" id="s1" style="left:571.34px;top:1173.80px;color:#000;transform:scaleX(0.9271)">Last</span>
<span class="t" id="v1" style="left:696.63px;top:1173.80px;color:#000;transform:scaleX(0.9576)">188,635,170</span>
<span class="t" id="s2" style="left:847.89px;top:1173.80px;color:#000;transform:scaleX(0.9842)">Average</span>
<span class="t" id="v2" style="left:1018.34px;top:1173.80px;color:#000;transform:scaleX(0.9545)">177,317,954</span>
<span class="t" id="s3" style="left:1167.98px;top:1173.80px;color:#000;transform:scaleX(1.0951)">Minimum</span>
<span class="t" id="v3" style="left:1356.52px;top:1173.80px;color:#000;transform:scaleX(0.9620)">133,320,928</span>
<span class="t" id="s4" style="left:1506.59px;top:1173.80px;color:#000;transform:scaleX(1.0452)">Maximum</span>
<span class="t" id="v4" style="left:1698.83px;top:1173.80px;color:#000;transform:scaleX(0.9568)">195,735,354</span>
<span class="t" id="s5" style="left:1848.27px;top:1173.80px;color:#000;transform:scaleX(1.0540)">Duration</span>
<span class="t" id="v5" style="left:2109.54px;top:1173.80px;color:#000;transform:scaleX(0.9555)">1:40</span>
<span class="t" id="h1" style="left:495.25px;top:1239.70px;color:#000;transform:scaleX(0.9589)">Show</span>
<span class="t" id="h2" style="left:617.00px;top:1239.70px;color:#000;transform:scaleX(1.0012)">Color</span>
<span class="t" id="h3" style="left:739.44px;top:1239.70px;color:#000;transform:scaleX(0.8935)">Scale</span>
<span class="t" id="h4" style="left:861.31px;top:1239.70px;color:#000;transform:scaleX(0.9959)">Counter</span>
<span class="t" id="h5" style="left:1033.44px;top:1239.70px;color:#000;transform:scaleX(0.9896)">Instance</span>
<span class="t" id="h6" style="left:1439.00px;top:1239.70px;color:#000;transform:scaleX(0.9436)">Parent</span>
<span class="t" id="h7" style="left:1590.97px;top:1239.70px;color:#000;transform:scaleX(0.9941)">Object</span>
<span class="t" id="h8" style="left:1797.00px;top:1239.70px;color:#000;transform:scaleX(0.9996)">Computer</span>
<span class="t" id="r1" style="left:736.02px;top:1279.60px;color:#fff;transform:scaleX(0.8796)">0.000001</span>
<span class="t" id="r2" style="left:857.37px;top:1279.60px;color:#fff;transform:scaleX(0.9565)">Bytes Total/sec</span>
<span class="t" id="r3" style="left:1031.03px;top:1279.60px;color:#fff;transform:scaleX(0.9316)">Realtek USB 2.5GbE Family Controller</span>
<span class="t" id="r4" style="left:1435.93px;top:1279.60px;color:#fff;transform:scaleX(1.2395)">---</span>
<span class="t" id="r5" style="left:1586.90px;top:1279.60px;color:#fff;transform:scaleX(0.9913)">Network Interface</span>
</body></html>
